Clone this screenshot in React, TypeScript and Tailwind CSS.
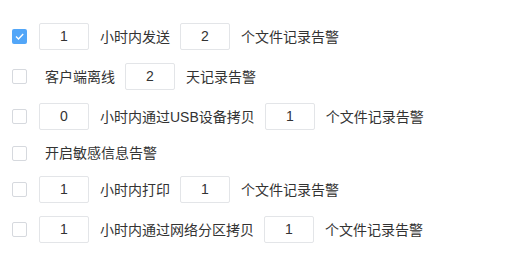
import React from "react";

const font = { fontFamily: '"Liberation Sans", "Noto Sans CJK SC", sans-serif' };

function Box({ checked }: { checked?: boolean }) {
  return checked ? (
    <div className="w-[15px] h-[15px] rounded-[2px] bg-[#52a6f8] flex items-center justify-center shrink-0">
      <svg width="11" height="11" viewBox="0 0 11 11">
        <path d="M2 5.6 L4.5 8 L9.2 3" fill="none" stroke="#fff" strokeWidth="1.4" />
      </svg>
    </div>
  ) : (
    <div className="w-[15px] h-[15px] rounded-[2px] border border-[#d6d9de] bg-white shrink-0" />
  );
}

function Num({ v, cls }: { v: string; cls: string }) {
  return (
    <div
      className={`w-[50px] h-[27px] border border-[#e3e5e8] rounded-[2px] flex items-center justify-center text-[14px] text-[#333] shrink-0 ${cls}`}
    >
      {v}
    </div>
  );
}

function T({ children, cls = "" }: { children: React.ReactNode; cls?: string }) {
  return <span className={`text-[14px] text-[#333] whitespace-nowrap leading-none ${cls}`}>{children}</span>;
}

export default function App() {
  return (
    <div className="w-[517px] h-[277px] bg-white pl-[12px] pt-[23px] flex flex-col gap-[13px]" style={font}>
      <div className="flex items-center h-[27px]">
        <Box checked />
        <Num v="1" cls="ml-[12px]" />
        <T cls="ml-[11px]">小时内发送</T>
        <Num v="2" cls="ml-[10px]" />
        <T cls="ml-[11px]">个文件记录告警</T>
      </div>
      <div className="flex items-center h-[27px]">
        <Box />
        <T cls="ml-[18px]">客户端离线</T>
        <Num v="2" cls="ml-[10px]" />
        <T cls="ml-[11px]">天记录告警</T>
      </div>
      <div className="flex items-center h-[27px]">
        <Box />
        <Num v="0" cls="ml-[12px]" />
        <T cls="ml-[11px]">小时内通过USB设备拷贝</T>
        <Num v="1" cls="ml-[10px]" />
        <T cls="ml-[11px]">个文件记录告警</T>
      </div>
      <div className="flex items-center h-[20px]">
        <Box />
        <T cls="ml-[18px]">开启敏感信息告警</T>
      </div>
      <div className="flex items-center h-[27px]">
        <Box />
        <Num v="1" cls="ml-[12px]" />
        <T cls="ml-[11px]">小时内打印</T>
        <Num v="1" cls="ml-[10px]" />
        <T cls="ml-[11px]">个文件记录告警</T>
      </div>
      <div className="flex items-center h-[27px]">
        <Box />
        <Num v="1" cls="ml-[12px]" />
        <T cls="ml-[11px]">小时内通过网络分区拷贝</T>
        <Num v="1" cls="ml-[10px]" />
        <T cls="ml-[11px]">个文件记录告警</T>
      </div>
    </div>
  );
}
